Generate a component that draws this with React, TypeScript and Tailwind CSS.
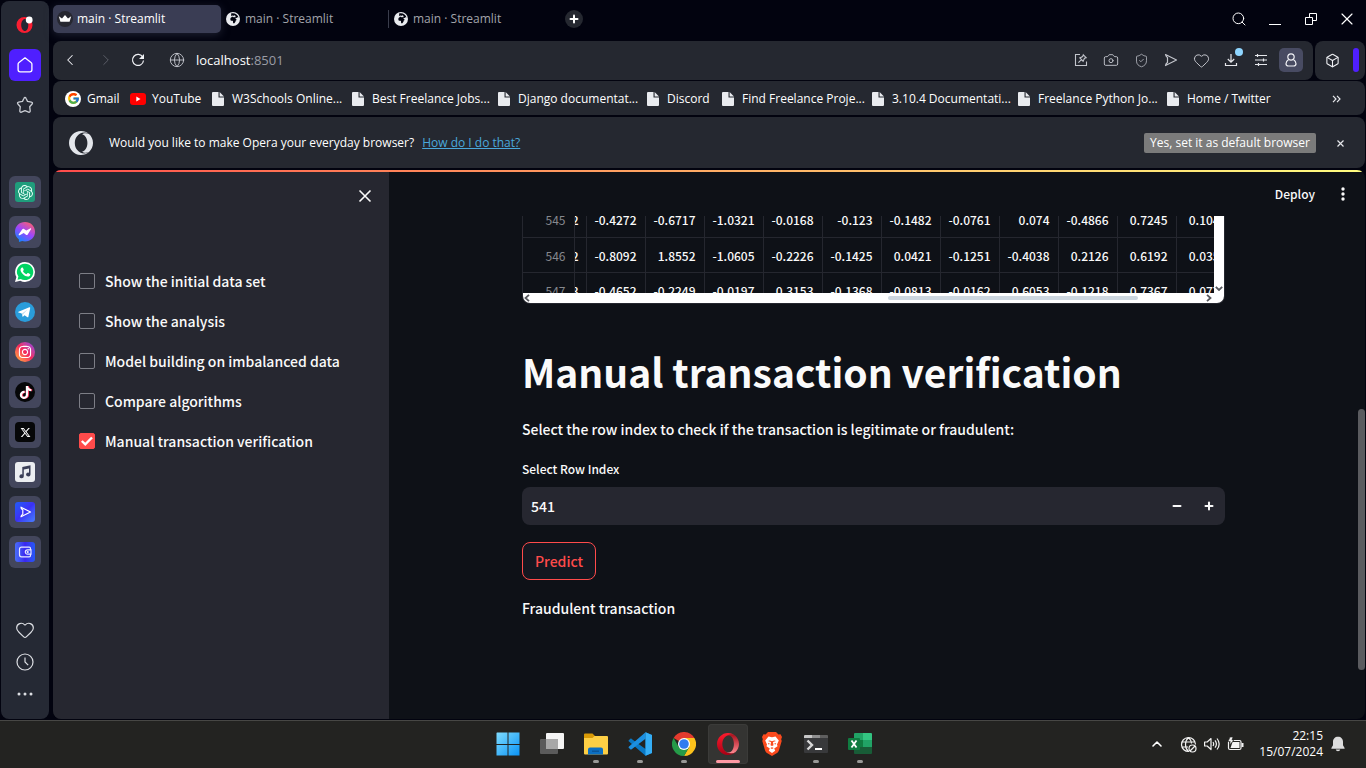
import { useState } from "react";
import type { ReactNode } from "react";
import {
  Box,
  Camera,
  ChevronLeft,
  ChevronRight,
  ChevronUp,
  Globe,
  Heart,
  Minus,
  Plus,
  Search,
  ShieldCheck,
  X,
} from "lucide-react";
import { FaEarthAfrica, FaInstagram, FaTiktok, FaXTwitter } from "react-icons/fa6";
import { SiOpenai } from "react-icons/si";
import { FcGoogle } from "react-icons/fc";

const UI = "font-['Open_Sans','Noto_Sans',sans-serif]";
const APP = "font-['Noto_Sans_CJK_SC','Open_Sans',sans-serif]";

/* ---------- Drawings ---------- */

const OPERA_LEFT =
  "M8.051 5.238c-1.328 1.566-2.186 3.883-2.246 6.480v.564c.061 2.598.918 4.912 2.246 6.479 1.721 2.236 4.279 3.654 7.139 3.654 1.756 0 3.400-.537 4.807-1.471C17.879 22.846 15.074 24 12 24c-.192 0-.383-.004-.570-.014C5.064 23.689 0 18.436 0 12 0 5.371 5.373 0 12 0h.045c3.055.012 5.840 1.166 7.953 3.055-1.408-.930-3.051-1.471-4.810-1.471-2.858 0-5.417 1.420-7.140 3.654z";
const OPERA_RIGHT =
  "M24 12c0 3.556-1.545 6.748-4.002 8.945-3.078 1.500-5.946.451-6.896-.205 3.023-.664 5.307-4.320 5.307-8.740 0-4.422-2.283-8.075-5.307-8.740.949-.654 3.818-1.703 6.896-.205C22.455 5.250 24 8.445 24 12z";

function OperaMark() {
  return (
    <svg width="24" height="24" viewBox="0 0 24 24" fill="#e3e6eb" className="shrink-0" aria-hidden="true">
      <path d={OPERA_LEFT} />
      <path d={OPERA_RIGHT} />
    </svg>
  );
}

function OperaRail() {
  return (
    <svg width="18" height="18" viewBox="0 0 18 18" aria-hidden="true">
      <path
        fill="#fa1e32"
        fillRule="evenodd"
        d="M8.500 1a8 8 0 1 0 0 16a8 8 0 0 0 0-16zM9 3c2 0 3.300 2.600 3.300 6S11 15 9 15s-3.800-2.600-3.800-6S7 3 9 3z"
      />
      <circle cx="13.200" cy="4" r="3.400" fill="#fff" />
    </svg>
  );
}

function HomeIcon() {
  return (
    <svg width="18" height="18" viewBox="0 0 18 18" fill="none" stroke="#fff" strokeWidth="1.300" strokeLinejoin="round" aria-hidden="true">
      <path d="M9 1.800l6 4.600c.6.500.9 1 .9 1.700v5.600c0 1.200-.9 2.100-2.100 2.100H4.200c-1.200 0-2.100-.9-2.100-2.100V8.100c0-.7.300-1.200.9-1.700z" />
    </svg>
  );
}

function StarIcon() {
  return (
    <svg width="18" height="18" viewBox="0 0 18 18" fill="none" stroke="#c9ccd3" strokeWidth="1.300" strokeLinejoin="round" aria-hidden="true">
      <path d="M9 1.500c.5 0 .8.300 1 .8l1.500 3.100 3.900.7c1.100.2 1.400 1.100.7 1.900l-2.400 2.700.5 4.200c.1 1-.7 1.600-1.600 1.200L9 14.600l-3.600 1.500c-.9.400-1.700-.2-1.600-1.200l.5-4.200L1.900 8c-.7-.8-.4-1.700.7-1.900l3.900-.7L8 2.300c.2-.5.500-.8 1-.8z" />
    </svg>
  );
}

function MessengerIcon() {
  return (
    <svg width="20" height="20" viewBox="0 0 20 20" aria-hidden="true">
      <defs>
        <linearGradient id="msg" x1="0.200" y1="1" x2="0.800" y2="0">
          <stop offset="0" stopColor="#0a8bff" />
          <stop offset="0.500" stopColor="#9a46ff" />
          <stop offset="1" stopColor="#ff5f6d" />
        </linearGradient>
      </defs>
      <path fill="url(#msg)" d="M10 0c5.700 0 10 4.100 10 9.700s-4.300 9.700-10 9.700c-1 0-2-.1-2.900-.4L4 20l-.1-2.600A9.500 9.500 0 0 1 0 9.700C0 4.100 4.300 0 10 0z" />
      <path fill="#fff" d="M3.800 12.300L7.300 7.200c.4-.6 1.200-.7 1.700-.3l2.300 1.700 3.800-2.100c.7-.4 1.300.2.900.8l-3.300 5.100c-.4.600-1.200.7-1.700.3L8.700 11l-4 2.200c-.7.300-1.300-.3-.9-.9z" />
    </svg>
  );
}

function WhatsAppIcon() {
  return (
    <svg width="20" height="20" viewBox="0 0 20 20" aria-hidden="true">
      <path fill="#fff" d="M10 0a10 10 0 0 1 0 20c-1.700 0-3.300-.4-4.700-1.200L0 20l1.400-5A10 10 0 0 1 10 0z" />
      <path fill="#00d463" d="M10.100 1.700a8.200 8.200 0 1 1-4.300 15.200l-3.300.8.900-3.100a8.200 8.200 0 0 1 6.700-12.900z" />
      <path fill="#fff" d="M7.200 5.400c.4 0 .6.100.8.500l.7 1.700c.1.300 0 .5-.2.800l-.6.700c.9 1.700 2 2.600 3.700 3.200l.8-1c.2-.2.500-.3.800-.2l1.700.8c.4.200.5.400.4.900-.2 1.300-1.400 1.900-2.500 1.800-3.300-.3-6.900-3.500-7.300-6.600-.1-1.200.7-2.500 1.700-2.600z" />
    </svg>
  );
}

function TelegramIcon() {
  return (
    <svg width="20" height="20" viewBox="0 0 20 20" aria-hidden="true">
      <circle cx="10" cy="10" r="10" fill="#2a9ddb" />
      <path fill="#fff" d="M3.500 9.700l10.800-4.400c.7-.2 1 .1.900.8l-1.800 8.700c-.1.600-.5.700-1 .4l-2.800-2-1.400 1.400c-.3.300-.6.200-.7-.2l-.8-2.800-3.100-1c-.6-.2-.6-.6-.1-.9z" />
      <path fill="#b7d9ee" d="M7 11.400l5.600-3.800-4.400 4.300-.4 2.600z" />
    </svg>
  );
}

function PlayerIcon() {
  return (
    <svg width="20" height="20" viewBox="0 0 20 20" aria-hidden="true">
      <rect width="20" height="20" rx="3" fill="#eceef1" />
      <path fill="#3b3f58" d="M7.300 5l8.200-1.800v9.300a2.200 1.900 0 1 1-1.500-1.800V6.500L8.800 7.600v6.700a2.200 1.900 0 1 1-1.500-1.800z" />
    </svg>
  );
}

function FlowIcon({ boxed = false }: { boxed?: boolean }) {
  return (
    <svg width={boxed ? 20 : 16} height={boxed ? 20 : 16} viewBox={boxed ? "-2 -2 20 20" : "0 0 16 16"} fill="none" stroke={boxed ? "#fff" : "#c3c5cc"} strokeWidth="1.200" strokeLinejoin="round" aria-hidden="true">
      <path d={boxed ? "M4 3.200L13.500 8 4 12.800c.1-1.600.8-2.200 1.800-2.600V5.800C4.800 5.400 4.100 4.800 4 3.200z" : "M2.500 2.500L13.500 8l-11 5.500c.2-1.800 1-2.300 2-3v-5c-1-.7-1.800-1.200-2-3z"} />
    </svg>
  );
}

function WalletIcon() {
  return (
    <svg width="20" height="20" viewBox="0 0 20 20" fill="none" stroke="#e6e8ff" strokeWidth="1.200" aria-hidden="true">
      <path d="M15.500 8V6.500c0-.8-.5-1.300-1.300-1.300H6.500c-1.200 0-2 .8-2 2v5.600c0 1.200.8 2 2 2h7.700c.8 0 1.300-.5 1.300-1.300V12" />
      <path d="M16 7.800h-3.500a2.200 2.200 0 0 0 0 4.400H16z" />
      <circle cx="12.700" cy="10" r="0.500" fill="#fff" />
    </svg>
  );
}

function CrownIcon() {
  return (
    <svg width="16" height="16" viewBox="0 0 16 16" aria-hidden="true">
      <circle cx="8" cy="8" r="8" fill="#262730" />
      <path fill="#fff" d="M1.800 5.200l3.200 2.200L8 4l3 3.400 3.200-2.200-1.600 5.600H3.400z" />
    </svg>
  );
}

function PageIcon() {
  return (
    <svg width="12" height="14" viewBox="0 0 12 14" className="mr-2 ml-px shrink-0" aria-hidden="true">
      <path fill="#e9ebef" d="M1 0h5.500v5.500H12V13a1 1 0 0 1-1 1H1a1 1 0 0 1-1-1V1a1 1 0 0 1 1-1z" />
      <path fill="#e9ebef" d="M7.600 0L12 4.400H7.600z" />
    </svg>
  );
}

function YouTubeIcon() {
  return (
    <svg width="16" height="12" viewBox="0 0 16 12" className="mr-[6px] shrink-0" aria-hidden="true">
      <rect width="16" height="12" rx="3" fill="#f00" />
      <path fill="#fff" d="M6.300 3.500v5L10.500 6z" />
    </svg>
  );
}

function EasySetupIcon() {
  return (
    <svg width="14" height="14" viewBox="0 0 14 14" stroke="#e6e7eb" strokeWidth="1.200" aria-hidden="true">
      <path d="M1 2.500h12M1 7h12M1 11.500h12M3.500 1v3M9.500 5.500v3M4.500 10v3" />
    </svg>
  );
}

function ProfileIcon() {
  return (
    <svg width="14" height="14" viewBox="0 0 14 14" fill="none" stroke="#f0f1f5" strokeWidth="1.200" aria-hidden="true">
      <circle cx="7" cy="4" r="3.200" />
      <path d="M4.600 6.500C3 7.500 2 9 2 10.800c0 1.500 1 2.200 2.400 2.200h5.200c1.400 0 2.400-.7 2.400-2.200 0-1.800-1-3.300-2.600-4.300" />
    </svg>
  );
}

function SnipIcon() {
  return (
    <svg width="14" height="14" viewBox="0 0 14 14" fill="none" stroke="#c3c5cc" strokeWidth="1.100" aria-hidden="true">
      <path d="M6 1.500H1.500v11h11V8.500" />
      <path d="M9.300 1.800l2.900 2.900-1.700.6-1.400 2.900-3.300-3.300 2.900-1.400zM7.400 6.600L4.400 9.600" />
    </svg>
  );
}

function DownloadIcon() {
  return (
    <svg width="14" height="14" viewBox="0 0 14 14" fill="none" stroke="#e6e7eb" strokeWidth="1.200" aria-hidden="true">
      <path d="M7 1v8M3.800 6L7 9.200 10.200 6M1.500 10v2.500h11V10" />
    </svg>
  );
}

function ReloadIcon() {
  return (
    <svg width="14" height="14" viewBox="0 0 14 14" aria-hidden="true">
      <path fill="none" stroke="#f0f1f5" strokeWidth="1.200" d="M11.800 4.200A5.500 5.500 0 1 0 12.500 7.500" />
      <path fill="#f0f1f5" d="M13 1v5H8z" />
    </svg>
  );
}

function RestoreIcon() {
  return (
    <svg width="12" height="12" viewBox="0 0 12 12" fill="none" stroke="#fff" aria-hidden="true">
      <path d="M.5 4.500h7v7h-7zM4.500 4.500v-4h7v7h-4" />
    </svg>
  );
}

/* Taskbar drawings */

function WindowsLogo() {
  return (
    <svg width="24" height="24" viewBox="0 0 24 24" aria-hidden="true">
      <defs>
        <linearGradient id="win" x1="0" y1="0" x2="1" y2="1">
          <stop offset="0" stopColor="#7fdcff" />
          <stop offset="1" stopColor="#0a93f5" />
        </linearGradient>
      </defs>
      <path fill="url(#win)" d="M1 .5h10.500V12H.5V1zM12.500.5h11V12h-11zM.5 13h11v10.500H.5zM12.500 13h11v10.500h-11z" />
    </svg>
  );
}

function TaskViewIcon() {
  return (
    <svg width="24" height="24" viewBox="0 0 24 24" aria-hidden="true">
      <rect x="6" y="1" width="18" height="16" rx="1" fill="#f4f4f4" />
      <rect x="0" y="7" width="18" height="15" rx="1" fill="#5b5b5b" />
      <path fill="#a8a8a8" d="M6 7h12v10H6z" />
    </svg>
  );
}

function FolderIcon() {
  return (
    <svg width="24" height="24" viewBox="0 0 24 24" aria-hidden="true">
      <path fill="#d99a06" d="M1 1.500h7.500L11 4v5H0V2.500a1 1 0 0 1 1-1z" />
      <path fill="#fdcf45" d="M10.500 4H23a1 1 0 0 1 1 1v16.500a1 1 0 0 1-1 1H1a1 1 0 0 1-1-1V6h8.500z" />
      <path fill="#0c6fc2" d="M6 15.500h11a2 2 0 0 1 2 2v5H4v-5a2 2 0 0 1 2-2z" />
      <path fill="#0a5599" d="M8 18.500h7v1.500H8z" />
    </svg>
  );
}

function CodeIcon() {
  return (
    <svg width="24" height="24" viewBox="0 0 24 24" aria-hidden="true">
      <path fill="#0a78c4" d="M17.500.2L24 3v18l-6.500 2.800L1 9.500c-.6-.5-.6-1 0-1.500l1.200-1.100c.5-.4 1-.4 1.500 0L17.500 17z" />
      <path fill="#1c8fe0" d="M17.500 6.800L3.700 17.200c-.5.400-1 .4-1.500 0L1 16.100c-.6-.5-.6-1 0-1.500L17.500.2z" />
      <path fill="#35aef5" d="M17.500.2L24 3v18l-6.500 2.800z" />
    </svg>
  );
}

function ChromeIcon() {
  return (
    <svg width="24" height="24" viewBox="0 0 24 24" aria-hidden="true">
      <path fill="#e33b2e" d="M12 12L1.600 6A12 12 0 0 1 22.400 6z" />
      <path fill="#fcc21b" d="M12 12V6h10.400A12 12 0 0 1 12 24l5.200-9z" />
      <path fill="#259b48" d="M12 12l5.200 3L12 24A12 12 0 0 1 1.600 6l5.200 9z" />
      <circle cx="12" cy="12" r="6" fill="#fff" />
      <circle cx="12" cy="12" r="4.800" fill="#2f7cf0" />
    </svg>
  );
}

function OperaTask() {
  return (
    <svg width="22" height="22" viewBox="0 0 24 24" aria-hidden="true">
      <defs>
        <linearGradient id="opl" x1="0" y1="0" x2="0" y2="1">
          <stop offset="0" stopColor="#ff1b2d" />
          <stop offset="1" stopColor="#a70014" />
        </linearGradient>
        <linearGradient id="opr" x1="0" y1="0" x2="0" y2="1">
          <stop offset="0" stopColor="#a8101c" />
          <stop offset="1" stopColor="#ff8a92" />
        </linearGradient>
      </defs>
      <path fill="url(#opr)" d="M8.051 5.238C9.770 3 12.330 1.584 15.190 1.584c1.757 0 3.400.54 4.810 1.471C22.455 5.250 24 8.445 24 12c0 3.556-1.545 6.748-4.002 8.945-1.407.934-3.050 1.470-4.808 1.470-2.860 0-5.418-1.418-7.139-3.654 1.323 1.570 3.050 2.500 4.900 2.500 3.170 0 5.500-4.140 5.500-9.260S16.120 2.740 12.950 2.740c-1.850 0-3.577.93-4.899 2.498z" />
      <path fill="url(#opl)" d={OPERA_LEFT} />
    </svg>
  );
}

function BraveIcon() {
  return (
    <svg width="20" height="24" viewBox="0 0 20 24" aria-hidden="true">
      <path fill="#fb4a1d" d="M6 0h8l2.500 2.500 2-.3L20 5l-.8 2.300.5 1.700-2.700 9.200c-.4 1.200-1 2-2 2.700L10 24l-5-3.100c-1-.7-1.600-1.500-2-2.700L.3 9l.5-1.700L0 5l1.500-2.800 2 .3z" />
      <path fill="#fff" d="M6.500 4.500L10 5.200l3.500-.7 3.300 4-1.800 4 .5 1.800-3.300 2.200 1 2.300L10 21l-3.200-2.200 1-2.300-3.300-2.200.5-1.800-1.800-4z" />
      <path fill="#fb4a1d" d="M6 9l3 1-.5 3.200 1.500.8 1.500-.8L11 10l3-1-1.800-.4L10 9.300l-2.200-.7zM5.800 11l2 .6-1 1.200zM14.200 11l-2 .6 1 1.200zM8.300 16l1.700-.7 1.700.7-1.700 1z" />
    </svg>
  );
}

function TerminalIcon() {
  return (
    <svg width="24" height="24" viewBox="0 0 24 24" aria-hidden="true">
      <path fill="#38393b" d="M0 6h24v14a1 1 0 0 1-1 1H1a1 1 0 0 1-1-1z" />
      <path fill="#c6c6c6" d="M1 3h7v3H0V4a1 1 0 0 1 1-1z" />
      <path fill="#8f8f8f" d="M8 3h8v3H8z" />
      <path fill="#5f5f5f" d="M16 3h7a1 1 0 0 1 1 1v2h-8z" />
      <path fill="none" stroke="#d8d8d8" strokeWidth="2.400" d="M3.500 8.500L8 13l-4.500 4.500" />
      <path fill="#fff" d="M11 16h7v2h-7z" />
    </svg>
  );
}

function ExcelIcon() {
  return (
    <svg width="24" height="24" viewBox="0 0 24 24" aria-hidden="true">
      <path fill="#21a366" d="M7 1h8v7H6V2a1 1 0 0 1 1-1z" />
      <path fill="#33c481" d="M15 1h8a1 1 0 0 1 1 1v6h-9z" />
      <path fill="#107c41" d="M6 8h9v7H6z" />
      <path fill="#21a366" d="M15 8h9v7h-9z" />
      <path fill="#185c37" d="M6 15h18v6a1 1 0 0 1-1 1H7a1 1 0 0 1-1-1z" />
      <rect x="0" y="6" width="12" height="12" rx="1" fill="#107c41" />
      <path stroke="#fff" strokeWidth="1.800" d="M3.500 8.500l5 7M8.500 8.500l-5 7" />
    </svg>
  );
}

function NetworkIcon() {
  return (
    <svg width="17" height="17" viewBox="0 0 17 17" fill="none" stroke="#f2f2f2" strokeWidth="1.200" aria-hidden="true">
      <path d="M9 15.500a7 7 0 1 1 6.500-7M1.600 6h13M1.600 11H8M8.500 1.500c-4 3.500-4 10.500 0 14M8.500 1.500c1.800 1.600 2.800 3.700 3 6" />
      <circle cx="12.500" cy="12.500" r="3.500" />
      <path d="M10 15l5-5" />
    </svg>
  );
}

function SpeakerIcon() {
  return (
    <svg width="16" height="14" viewBox="0 0 16 14" fill="none" stroke="#f2f2f2" strokeWidth="1.200" strokeLinejoin="round" aria-hidden="true">
      <path d="M.6 5v4h2.600L7 12.500v-11L3.200 5z" />
      <path d="M9 5c.8 1.200.8 2.800 0 4M11 3.300c1.700 2.200 1.700 5.200 0 7.400M13 1.500c2.600 3.300 2.600 7.700 0 11" />
    </svg>
  );
}

function BatteryIcon() {
  return (
    <svg width="17" height="14" viewBox="0 0 17 14" aria-hidden="true">
      <rect x="1.500" y="3.500" width="12.500" height="9" rx="1.500" fill="none" stroke="#f2f2f2" strokeWidth="1.200" />
      <path fill="#f2f2f2" d="M5.500 5H12.500v6H3.500zM14.500 6h2v4h-2z" />
      <path fill="#f2f2f2" stroke="#232321" strokeWidth="0.600" d="M3 0h3L5 3h2L2.500 8l.7-3.500H1z" />
    </svg>
  );
}

function BellIcon() {
  return (
    <svg width="16" height="16" viewBox="0 0 16 16" aria-hidden="true">
      <path fill="#dcdcdc" d="M8 .8c3 0 5 2.100 5 5v3.400l1.600 2.800c.2.400 0 .8-.5.800H1.900c-.5 0-.7-.4-.5-.8L3 9.200V5.800c0-2.900 2-5 5-5zM5.800 13.600h4.400c-.2 1.100-1.100 1.700-2.200 1.700s-2-.6-2.200-1.700z" />
    </svg>
  );
}

/* ---------- Browser chrome ---------- */

function RailButton({ label, children, tile = true }: { label: string; children: ReactNode; tile?: boolean }) {
  return (
    <button
      type="button"
      aria-label={label}
      className={`flex size-8 shrink-0 items-center justify-center rounded-md ${tile ? "bg-[#43465c]" : ""}`}
    >
      {children}
    </button>
  );
}

function Rail() {
  return (
    <nav aria-label="Browser sidebar" className="my-px ml-px flex w-12 shrink-0 flex-col items-center rounded-lg bg-[#252934] pb-[9px]">
      <button type="button" aria-label="Opera menu" className="flex h-12 w-8 items-center justify-center">
        <OperaRail />
      </button>
      <button type="button" aria-label="Home" className="flex size-8 items-center justify-center rounded-md bg-[#4f1fff]">
        <HomeIcon />
      </button>
      <button type="button" aria-label="Bookmarks" className="mt-2 flex size-8 items-center justify-center">
        <StarIcon />
      </button>
      <div className="mt-[55px] flex flex-col gap-2">
        <RailButton label="ChatGPT">
          <span className="flex size-5 items-center justify-center rounded-[3px] bg-[#1f9d7c]">
            <SiOpenai size={15} color="#e6fff7" />
          </span>
        </RailButton>
        <RailButton label="Messenger">
          <MessengerIcon />
        </RailButton>
        <RailButton label="WhatsApp">
          <WhatsAppIcon />
        </RailButton>
        <RailButton label="Telegram">
          <TelegramIcon />
        </RailButton>
        <RailButton label="Instagram">
          <span className="flex size-5 items-center justify-center rounded-full bg-linear-to-tr from-[#ffb020] via-[#f5245c] to-[#8a2be8]">
            <FaInstagram size={14} color="#fff" />
          </span>
        </RailButton>
        <RailButton label="TikTok">
          <span className="flex size-5 items-center justify-center rounded-full bg-[#060708]">
            <FaTiktok size={13} color="#fff" className="drop-shadow-[1px_0_0_#f0345a]" />
          </span>
        </RailButton>
        <RailButton label="X">
          <span className="flex size-5 items-center justify-center rounded-sm bg-[#060708]">
            <FaXTwitter size={11} color="#fff" />
          </span>
        </RailButton>
        <RailButton label="Player">
          <PlayerIcon />
        </RailButton>
        <RailButton label="My Flow">
          <span className="rounded-[3px] bg-linear-to-br from-[#1f5bf5] via-[#3b2ff5] to-[#4a7cff]">
            <FlowIcon boxed />
          </span>
        </RailButton>
        <RailButton label="Wallet">
          <span className="rounded-[3px] bg-linear-to-r from-[#4a6cf8] via-[#3b25f0] to-[#2457f5]">
            <WalletIcon />
          </span>
        </RailButton>
      </div>
      <div className="mt-auto flex flex-col">
        <RailButton label="Pinboards" tile={false}>
          <Heart size={20} strokeWidth={1.4} color="#dcdee3" />
        </RailButton>
        <RailButton label="History" tile={false}>
          <svg width="18" height="18" viewBox="0 0 18 18" fill="none" stroke="#dcdee3" strokeWidth="1.200" aria-hidden="true">
            <circle cx="9" cy="9" r="8" />
            <path d="M9 4.500V9l3.200 3.200" />
          </svg>
        </RailButton>
        <RailButton label="More" tile={false}>
          <svg width="16" height="4" viewBox="0 0 16 4" fill="#dcdee3" aria-hidden="true">
            <circle cx="2" cy="2" r="1.500" />
            <circle cx="8" cy="2" r="1.500" />
            <circle cx="14" cy="2" r="1.500" />
          </svg>
        </RailButton>
      </div>
    </nav>
  );
}

function TabStrip() {
  const tab = "flex h-7 w-[168px] items-center gap-[5px] pl-[5px] text-left text-xs";
  return (
    <div className="flex h-[41px] items-start pt-[5px]">
      <div role="tablist" className="flex">
        <button type="button" role="tab" aria-selected="true" className="flex h-7 w-[168px] items-center gap-1 rounded-[5px] bg-[#3a3d54] pl-1 text-left text-xs text-white shadow-[0_2px_8px_#3a3d5480]">
          <CrownIcon />
          main · Streamlit
        </button>
        <button type="button" role="tab" aria-selected="false" className={`${tab} text-[#a3a4aa]`}>
          <FaEarthAfrica size={14} color="#e9ebef" />
          main · Streamlit
        </button>
        <button type="button" role="tab" aria-selected="false" className={`${tab} text-[#a3a4aa]`}>
          <span className="-ml-[6px] h-[18px] w-px bg-[#3a3d4c]" />
          <FaEarthAfrica size={14} color="#e9ebef" />
          main · Streamlit
        </button>
      </div>
      <button type="button" aria-label="New tab" className="mt-[5px] ml-2 flex size-[18px] items-center justify-center rounded-full bg-[#252830]">
        <Plus size={12} strokeWidth={4} color="#fff" />
      </button>
      <div className="ml-auto flex">
        <button type="button" aria-label="Search tabs" className="flex h-7 w-9 items-center justify-center">
          <Search size={16} strokeWidth={1.5} color="#fff" />
        </button>
        <button type="button" aria-label="Minimize" className="flex h-7 w-9 items-center justify-center">
          <span className="mt-[10px] h-px w-3 bg-white" />
        </button>
        <button type="button" aria-label="Restore" className="flex h-7 w-9 items-center justify-center">
          <RestoreIcon />
        </button>
        <button type="button" aria-label="Close window" className="flex h-7 w-9 items-center justify-center">
          <X size={20} strokeWidth={1.4} color="#fff" />
        </button>
      </div>
    </div>
  );
}

function ToolButton({ label, children }: { label: string; children: ReactNode }) {
  return (
    <button type="button" aria-label={label} className="relative flex h-8 w-[30px] items-center justify-center">
      {children}
    </button>
  );
}

function Toolbar() {
  const nav = "flex size-8 shrink-0 items-center justify-center";
  return (
    <div className="flex h-[39px] gap-0.5">
      <div className="flex flex-1 items-center rounded-lg bg-[#252830] pr-[7px] pb-px pl-px">
        <button type="button" aria-label="Back" className={nav}>
          <ChevronLeft size={18} strokeWidth={1.4} color="#f0f1f5" />
        </button>
        <button type="button" aria-label="Forward" className={`${nav} ml-1`}>
          <ChevronRight size={18} strokeWidth={1.3} color="#5b5e68" />
        </button>
        <button type="button" aria-label="Reload" className={nav}>
          <ReloadIcon />
        </button>
        <span className={`${nav} ml-[7px]`}>
          <Globe size={16} strokeWidth={1.4} color="#c3c5cc" />
        </span>
        <div className="ml-[3px] flex-1 text-[13px] leading-5 text-white">
          localhost<span className="text-[#9a9ca5]">:8501</span>
        </div>
        <ToolButton label="Snapshot pin">
          <SnipIcon />
        </ToolButton>
        <ToolButton label="Snapshot">
          <Camera size={16} strokeWidth={1.4} color="#c3c5cc" />
        </ToolButton>
        <ToolButton label="Protection">
          <ShieldCheck size={15} strokeWidth={1.4} color="#aeb0b8" />
        </ToolButton>
        <ToolButton label="My Flow">
          <FlowIcon />
        </ToolButton>
        <ToolButton label="Add to pinboards">
          <Heart size={17} strokeWidth={1.4} color="#c3c5cc" />
        </ToolButton>
        <ToolButton label="Downloads">
          <DownloadIcon />
          <span className="absolute top-1 right-[3px] size-2 rounded-full bg-[#8fd6ff]" />
        </ToolButton>
        <ToolButton label="Easy setup">
          <EasySetupIcon />
        </ToolButton>
        <ToolButton label="Profile">
          <span className="flex size-6 shrink-0 items-center justify-center rounded-[5px] bg-[#484b62]">
            <ProfileIcon />
          </span>
        </ToolButton>
      </div>
      <div className="flex w-[50px] shrink-0 items-center rounded-lg bg-[#252830] pr-1.5 pb-px pl-2.5">
        <button type="button" aria-label="Extensions">
          <Box size={15} strokeWidth={1.7} color="#f0f1f5" />
        </button>
        <span className="ml-auto h-6 w-1.5 rounded-[3px] bg-[#4f1fff]" />
      </div>
    </div>
  );
}

const BOOKMARKS = [
  { label: "W3Schools Online...", width: "w-[140px]" },
  { label: "Best Freelance Jobs...", width: "w-[146px]" },
  { label: "Django documentat...", width: "w-[149px]" },
  { label: "Discord", width: "w-[75px]" },
  { label: "Find Freelance Proje...", width: "w-[150px]" },
  { label: "3.10.4 Documentati...", width: "w-[146px]" },
  { label: "Freelance Python Jo...", width: "w-[149px]" },
  { label: "Home / Twitter", width: "w-[110px]" },
];

function BookmarksBar() {
  const item = "flex shrink-0 items-center whitespace-nowrap";
  return (
    <div className="mt-px flex h-[34px] items-center rounded-lg bg-[#252830] pt-px pr-6 pl-3 text-xs text-white">
      <a href="#gmail" className={`${item} w-[65px]`}>
        <span className="mr-[6px] flex size-4 items-center justify-center rounded-full bg-white">
          <FcGoogle size={13} />
        </span>
        Gmail
      </a>
      <a href="#youtube" className={`${item} w-[81px]`}>
        <YouTubeIcon />
        YouTube
      </a>
      {BOOKMARKS.map((b) => (
        <a key={b.label} href="#bookmark" className={`${item} ${b.width}`}>
          <PageIcon />
          {b.label}
        </a>
      ))}
      <button type="button" aria-label="More bookmarks" className="ml-auto">
        <svg width="9" height="8" viewBox="0 0 9 8" fill="none" stroke="#e6e7eb" strokeWidth="1.200" aria-hidden="true">
          <path d="M1 .8L4 4 1 7.200M5 .8L8 4 5 7.200" />
        </svg>
      </button>
    </div>
  );
}

function DefaultBanner() {
  return (
    <div className="mt-0.5 flex h-[51px] items-center rounded-lg bg-[#252830] pt-px pr-[21px] pl-4 text-xs text-white">
      <OperaMark />
      <p className="ml-4 whitespace-nowrap">Would you like to make Opera your everyday browser?</p>
      <a href="#how" className="ml-2 text-[#4aa8dc] underline">
        How do I do that?
      </a>
      <button type="button" className="ml-auto h-5 w-[172px] rounded-[2px] bg-[#7b7b7b] leading-5 text-white">
        Yes, set it as default browser
      </button>
      <button type="button" aria-label="Dismiss" className="ml-[21px]">
        <svg width="7" height="7" viewBox="0 0 7 7" stroke="#e6e7eb" strokeWidth="1.200" aria-hidden="true">
          <path d="M.5.5l6 6M6.500.5l-6 6" />
        </svg>
      </button>
    </div>
  );
}

/* ---------- Streamlit page ---------- */

const OPTIONS = [
  "Show the initial data set",
  "Show the analysis",
  "Model building on imbalanced data",
  "Compare algorithms",
  "Manual transaction verification",
];

function OptionsPanel() {
  const [checked, setChecked] = useState<string[]>([OPTIONS[4]]);
  const toggle = (o: string) => setChecked((c) => (c.includes(o) ? c.filter((x) => x !== o) : [...c, o]));
  return (
    <aside className="flex w-[336px] shrink-0 flex-col bg-[#262730] pl-[26px]">
      <button type="button" aria-label="Close sidebar" className="mt-3 mr-3 flex size-6 items-center justify-center self-end">
        <svg width="14" height="14" viewBox="0 0 14 14" stroke="#fafafa" strokeWidth="1.600" aria-hidden="true">
          <path d="M1.500 1.500l11 11M12.500 1.500l-11 11" />
        </svg>
      </button>
      <div className="mt-[61px] flex flex-col gap-4">
        {OPTIONS.map((o) => (
          <label key={o} className="flex h-6 items-center gap-2.5 text-[14px] leading-6 text-[#fafafa]">
            <span className="relative size-4 shrink-0">
              <input
                type="checkbox"
                checked={checked.includes(o)}
                onChange={() => toggle(o)}
                className="peer block size-4 appearance-none rounded-[2px] border border-[#7d7e86] checked:border-[#ff4b4b] checked:bg-[#ff4b4b]"
              />
              <svg width="16" height="16" viewBox="0 0 16 16" className="pointer-events-none absolute inset-0 hidden peer-checked:block" aria-hidden="true">
                <path fill="none" stroke="#fff" strokeWidth="2.400" d="M2.800 8l3.500 3.400L13 4.500" />
              </svg>
            </span>
            {o}
          </label>
        ))}
      </div>
    </aside>
  );
}

const ROWS = [
  ["545", "2", "-0.4272", "-0.6717", "-1.0321", "-0.0168", "-0.123", "-0.1482", "-0.0761", "0.074", "-0.4866", "0.7245", "0.1045"],
  ["546", "2", "-0.8092", "1.8552", "-1.0605", "-0.2226", "-0.1425", "0.0421", "-0.1251", "-0.4038", "0.2126", "0.6192", "0.0353"],
  ["547", "3", "-0.4652", "-0.2249", "-0.0197", "0.3153", "-0.1368", "-0.0813", "-0.0162", "0.6053", "-0.1218", "0.7367", "0.0771"],
];

function DataGrid() {
  return (
    <div className="flex h-[88px] flex-col overflow-hidden rounded-b-lg border border-t-0 border-[#25272f]">
      <div className="flex min-h-0 flex-1">
        <div className="min-w-0 flex-1 overflow-hidden">
          <table className="-mt-[14px] w-[703px] table-fixed border-collapse text-[12px] leading-8 text-[#fafafa]">
            <colgroup>
              <col className="w-[51px]" />
              <col className="w-3" />
              {ROWS[0].slice(2).map((_, i) => (
                <col key={i} className="w-[59px]" />
              ))}
            </colgroup>
            <tbody>
              {ROWS.map((row) => (
                <tr key={row[0]} className="border-b border-[#25272f]">
                  <th scope="row" className="h-[35px] border-r border-[#25272f] p-0 pt-0.5 pr-2 text-right font-normal text-[#86888e]">
                    {row[0]}
                  </th>
                  <td className="overflow-hidden border-r border-[#25272f] p-0 pt-0.5">
                    <div className="flex w-1 justify-end overflow-hidden">{row[1]}</div>
                  </td>
                  {row.slice(2).map((v, i) => (
                    <td key={i} className="border-r border-[#25272f] p-0 pt-0.5 pr-2 text-right">
                      {v}
                    </td>
                  ))}
                </tr>
              ))}
            </tbody>
          </table>
        </div>
        <div className="flex w-[10px] shrink-0 items-end justify-center bg-white pb-0.5">
          <svg width="8" height="5" viewBox="0 0 8 5" fill="none" stroke="#55575c" strokeWidth="1.800" aria-hidden="true">
            <path d="M.8.8L4 4 7.200.8" />
          </svg>
        </div>
      </div>
      <div className="flex h-[10px] shrink-0 items-center bg-white pr-3">
        <svg width="6" height="8" viewBox="0 0 6 8" fill="none" stroke="#55575c" strokeWidth="1.800" className="ml-px" aria-hidden="true">
          <path d="M5 .8L1.500 4 5 7.200" />
        </svg>
        <span className="flex-[358]" />
        <span className="h-1 flex-[250] rounded-full bg-[#ccd6df]" />
        <span className="flex-[68]" />
        <svg width="6" height="8" viewBox="0 0 6 8" fill="none" stroke="#55575c" strokeWidth="1.800" aria-hidden="true">
          <path d="M1 .8L4.500 4 1 7.200" />
        </svg>
      </div>
    </div>
  );
}

function MainContent() {
  const [index, setIndex] = useState(541);
  return (
    <main className="min-w-0 flex-1 overflow-hidden">
      <header className="flex h-11 items-center justify-end pr-[13px] text-[#fafafa]">
        <button type="button" className="text-[12px] leading-5">
          Deploy
        </button>
        <button type="button" aria-label="Main menu" className="ml-[26px]">
          <svg width="4" height="14" viewBox="0 0 4 14" fill="#fafafa" aria-hidden="true">
            <circle cx="2" cy="2" r="1.700" />
            <circle cx="2" cy="7" r="1.700" />
            <circle cx="2" cy="12" r="1.700" />
          </svg>
        </button>
      </header>
      <div className="mx-auto flex max-w-[703px] flex-col text-[14px] leading-6 text-[#fafafa]">
        <DataGrid />
        <h1 className="mt-[41px] text-[39px] leading-[53px] font-bold">Manual transaction verification</h1>
        <p className="mt-[19px]">Select the row index to check if the transaction is legitimate or fraudulent:</p>
        <label htmlFor="row-index" className="mt-[18px] text-[12px] leading-5">
          Select Row Index
        </label>
        <div className="mt-2 flex h-[38px] overflow-hidden rounded-lg bg-[#262730]">
          <input
            id="row-index"
            inputMode="numeric"
            value={index}
            onChange={(e) => setIndex(Number(e.target.value) || 0)}
            className="min-w-0 flex-1 bg-transparent px-[9px] outline-none"
          />
          <button type="button" aria-label="Decrease" onClick={() => setIndex(index - 1)} className="flex w-8 items-center justify-center">
            <Minus size={12} strokeWidth={4} />
          </button>
          <button type="button" aria-label="Increase" onClick={() => setIndex(index + 1)} className="flex w-8 items-center justify-center">
            <Plus size={12} strokeWidth={4} />
          </button>
        </div>
        <button type="button" className="mt-[17px] h-[38px] self-start rounded-lg border border-[#ff4b4b] bg-[#131720] px-3 text-[#ff4b4b]">
          Predict
        </button>
        <p className="mt-4">Fraudulent transaction</p>
      </div>
    </main>
  );
}

function StreamlitPage() {
  return (
    <div className={`mt-0.5 mb-px flex min-h-0 flex-1 flex-col overflow-hidden rounded-lg bg-[#0e1117] font-medium ${APP}`}>
      <div className="h-0.5 shrink-0 bg-linear-to-r from-[#ff4b4b] to-[#fffd80]" />
      <div className="flex min-h-0 flex-1">
        <OptionsPanel />
        <MainContent />
        <div className="flex w-[7px] shrink-0 flex-col">
          <span className="flex-[237]" />
          <span className="flex-[261] rounded-full bg-[#5a5b5f]" />
          <span className="flex-[49]" />
        </div>
      </div>
    </div>
  );
}

/* ---------- Taskbar ---------- */

const APPS: { label: string; icon: ReactNode; state: "none" | "open" | "active" }[] = [
  { label: "Start", icon: <WindowsLogo />, state: "none" },
  { label: "Task View", icon: <TaskViewIcon />, state: "none" },
  { label: "File Explorer", icon: <FolderIcon />, state: "open" },
  { label: "Visual Studio Code", icon: <CodeIcon />, state: "open" },
  { label: "Chrome", icon: <ChromeIcon />, state: "open" },
  { label: "Opera", icon: <OperaTask />, state: "active" },
  { label: "Brave", icon: <BraveIcon />, state: "none" },
  { label: "Terminal", icon: <TerminalIcon />, state: "open" },
  { label: "Excel", icon: <ExcelIcon />, state: "open" },
];

function Taskbar() {
  return (
    <footer className="grid h-12 shrink-0 grid-cols-[1fr_auto_1fr] items-center border-t border-[#474745] bg-[#232321] pb-px">
      <span />
      <div className="ml-0.5 flex gap-1">
        {APPS.map((a) => (
          <button
            key={a.label}
            type="button"
            aria-label={a.label}
            className={`relative flex size-10 items-center justify-center rounded ${a.state === "active" ? "bg-[#343432] ring-1 ring-[#3b3b39] ring-inset" : ""}`}
          >
            {a.icon}
            {a.state === "open" && <span className="absolute bottom-px left-[17px] h-[3px] w-1.5 rounded-full bg-[#999997]" />}
            {a.state === "active" && <span className="absolute bottom-px left-2 h-[3px] w-6 rounded-full bg-[#ff99a4]" />}
          </button>
        ))}
      </div>
      <div className="flex items-center justify-end gap-[7px] pr-5 text-white">
        <ChevronUp size={16} strokeWidth={2.4} className="mr-2" />
        <NetworkIcon />
        <SpeakerIcon />
        <BatteryIcon />
        <time dateTime="2024-07-15T22:15" className="ml-2 text-right text-[12px] leading-4">
          22:15
          <br />
          15/07/2024
        </time>
        <BellIcon />
      </div>
    </footer>
  );
}

export default function App() {
  return (
    <div className={`flex h-screen flex-col overflow-hidden bg-[#02030f] ${UI}`}>
      <div className="flex min-h-0 flex-1">
        <Rail />
        <div className="mr-px ml-1 flex min-w-0 flex-1 flex-col">
          <TabStrip />
          <Toolbar />
          <BookmarksBar />
          <DefaultBanner />
          <StreamlitPage />
        </div>
      </div>
      <Taskbar />
    </div>
  );
}
